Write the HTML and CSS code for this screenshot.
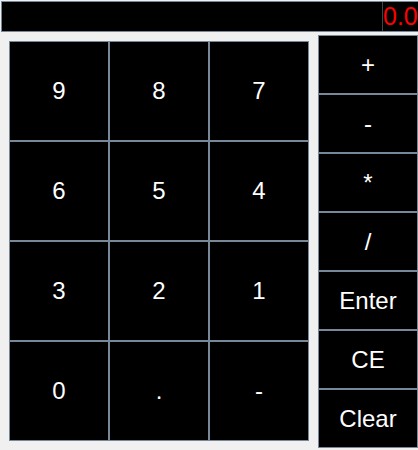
FILE: index.html
```html
<!DOCTYPE html>
<html>
<head>
<meta charset="utf-8">
<link rel="stylesheet" href="styles.css">
</head>
<body>
<div class="display">
  <div class="field"></div>
  <div class="value">0.0</div>
</div>
<div class="main">
  <div class="keypad">
    <button class="key">9</button>
    <button class="key">8</button>
    <button class="key">7</button>
    <button class="key">6</button>
    <button class="key">5</button>
    <button class="key">4</button>
    <button class="key">3</button>
    <button class="key">2</button>
    <button class="key">1</button>
    <button class="key">0</button>
    <button class="key">.</button>
    <button class="key">-</button>
  </div>
  <div class="ops">
    <button class="op">+</button>
    <button class="op">-</button>
    <button class="op">*</button>
    <button class="op">/</button>
    <button class="op">Enter</button>
    <button class="op">CE</button>
    <button class="op">Clear</button>
  </div>
</div>
</body>
</html>
```
FILE: styles.css
```css
html, body {
  margin: 0;
  padding: 0;
  overflow: hidden;
  background: #f0f0f0;
  font-family: "Liberation Sans", Arial, sans-serif;
}
.display {
  display: flex;
  box-sizing: border-box;
  margin: 1px 0 0 1px;
  width: 417px;
  height: 31px;
  border: 1px solid #778899;
  border-right: 0;
  background: #000;
  overflow: hidden;
}
.field {
  flex: none;
  width: 380px;
  border-right: 1px solid #444;
}
.value {
  color: #ff0000;
  font-size: 25px;
  line-height: 29px;
  padding-left: 0;
  white-space: nowrap;
}
.main {
  display: flex;
  align-items: flex-start;
  gap: 9px;
  padding-left: 9px;
}
.keypad {
  margin-top: 9px;
  display: grid;
  grid-template-columns: repeat(3, 100px);
  grid-auto-rows: 100px;
}
.ops {
  margin-top: 3px;
  display: flex;
  flex-direction: column;
}
.key, .op {
  box-sizing: border-box;
  margin: 0;
  padding: 0;
  border: 1px solid #778899;
  background: #000;
  color: #fff;
  font-family: "Liberation Sans", Arial, sans-serif;
  font-size: 24px;
}
.op {
  width: 100px;
  height: 59px;
}
```
